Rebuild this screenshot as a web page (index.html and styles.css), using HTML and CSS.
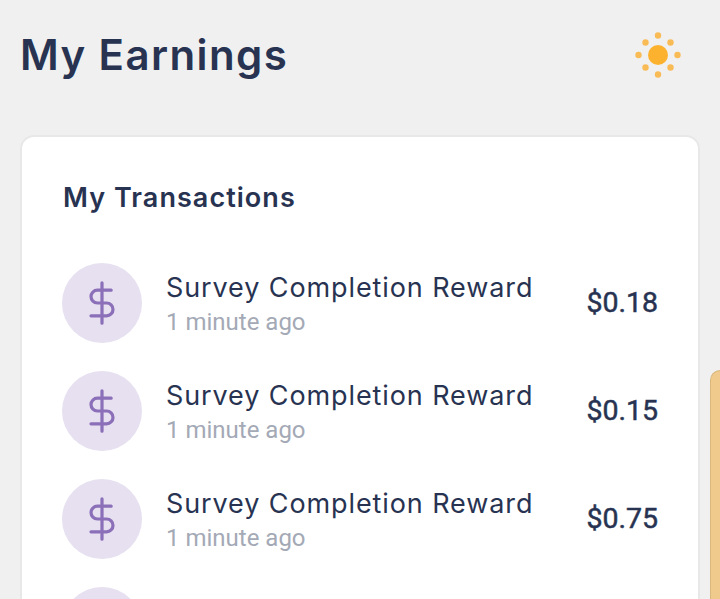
FILE: index.html
```html
<!DOCTYPE html>
<html lang="en">
<head>
<meta charset="utf-8">
<title>My Earnings</title>
<link rel="stylesheet" href="styles.css">
</head>
<body>
<div class="page">
  <header class="header">
    <h1 class="title">My Earnings</h1>
    <svg class="sun" viewBox="0 0 48 48" aria-hidden="true">
      <circle cx="24" cy="24" r="10" fill="#fdb22f"/>
      <g fill="#f9bb55">
        <circle cx="24" cy="4.500" r="3.200"/>
        <circle cx="24" cy="43.500" r="3.200"/>
        <circle cx="4.500" cy="24" r="3.200"/>
        <circle cx="43.500" cy="24" r="3.200"/>
        <circle cx="11.500" cy="11.500" r="3.200"/>
        <circle cx="36.500" cy="11.500" r="3.200"/>
        <circle cx="11.500" cy="36.500" r="3.200"/>
        <circle cx="36.500" cy="36.500" r="3.200"/>
      </g>
    </svg>
  </header>
  <main class="card">
    <h2 class="card-title">My Transactions</h2>
    <ul class="list">
      <li class="row">
        <span class="avatar"><svg class="dollar" viewBox="0 0 24 24"><path d="M12 1v22M17 5H9.500a3.500 3.500 0 0 0 0 7h5a3.500 3.500 0 0 1 0 7H6"/></svg></span>
        <div class="info"><div class="name">Survey Completion Reward</div><div class="time">1 minute ago</div></div>
        <div class="amount">$0.18</div>
      </li>
      <li class="row">
        <span class="avatar"><svg class="dollar" viewBox="0 0 24 24"><path d="M12 1v22M17 5H9.500a3.500 3.500 0 0 0 0 7h5a3.500 3.500 0 0 1 0 7H6"/></svg></span>
        <div class="info"><div class="name">Survey Completion Reward</div><div class="time">1 minute ago</div></div>
        <div class="amount">$0.15</div>
      </li>
      <li class="row">
        <span class="avatar"><svg class="dollar" viewBox="0 0 24 24"><path d="M12 1v22M17 5H9.500a3.500 3.500 0 0 0 0 7h5a3.500 3.500 0 0 1 0 7H6"/></svg></span>
        <div class="info"><div class="name">Survey Completion Reward</div><div class="time">1 minute ago</div></div>
        <div class="amount">$0.75</div>
      </li>
      <li class="row">
        <span class="avatar"></span>
      </li>
    </ul>
  </main>
  <div class="edge"></div>
</div>
</body>
</html>
```
FILE: styles.css
```css
* { box-sizing: border-box; }
html, body { margin: 0; height: 100%; overflow: hidden; }
body { background: #f0f0f0; font-family: "Inter", sans-serif; color: #28355a; }
.page { position: relative; height: 599px; overflow: hidden; padding: 0 20px; }
.header { display: flex; align-items: center; justify-content: space-between; height: 109px; padding-right: 18px; }
.title { margin: 0; font-size: 42px; font-weight: 600; line-height: 1; letter-spacing: 1.4px; color: #283352; }
.sun { width: 48px; height: 48px; display: block; }
.card { margin-top: 26px; height: 600px; background: #fff; border: 2px solid #e8e8e8; border-bottom: 0; border-radius: 14px 14px 0 0; padding: 42px 40px 0 40px; }
.card-title { margin: 0 0 46px; padding-left: 1px; font-size: 27px; line-height: 38px; font-weight: 600; letter-spacing: 1.05px; color: #283352; }
.list { list-style: none; margin: 0; padding: 0; display: flex; flex-direction: column; gap: 28px; }
.row { display: flex; align-items: center; height: 80px; }
.avatar { flex: none; width: 80px; height: 80px; border-radius: 50%; background: #e6e0f0; display: flex; align-items: center; justify-content: center; }
.dollar { width: 44px; height: 44px; fill: none; stroke: #8b6fb8; stroke-width: 1.750; stroke-linecap: round; stroke-linejoin: round; }
.info { flex: 1; margin-left: 24px; min-width: 0; padding-top: 3px; }
.name { font-size: 27px; line-height: 34px; letter-spacing: 0.9px; color: #283352; white-space: nowrap; }
.time { font-family: "Roboto", sans-serif; font-size: 24px; line-height: 34px; color: #a4a9b6; }
.amount { font-family: "Roboto", sans-serif; font-size: 28.500px; font-weight: 400; -webkit-text-stroke: 0.5px #283352; color: #283352; padding-bottom: 2px; }
.edge { position: absolute; right: 0; top: 370px; width: 10px; height: 229px; background: #f0c98c; border: 1px solid #d9b87f; border-right: 0; border-bottom: 0; border-radius: 10px 0 0 0; }
```
